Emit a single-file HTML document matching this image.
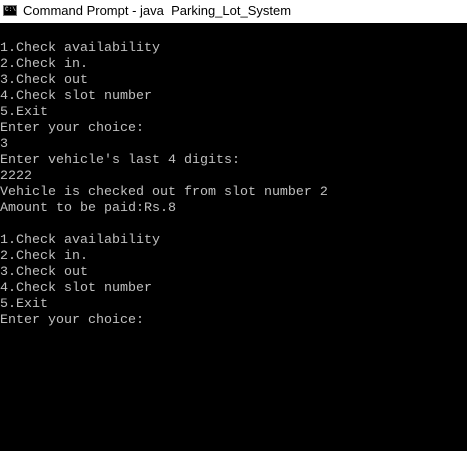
<!DOCTYPE html>
<html><head><style>
html,body{margin:0;padding:0;width:467px;height:451px;overflow:hidden;background:#000;}
.t{position:absolute;left:0;top:0;width:467px;height:23px;background:#fff;}
.t span{position:absolute;left:23px;top:3px;font:13px "Liberation Sans",sans-serif;color:#000;}
.ic{position:absolute;left:3px;top:5px;width:14px;height:11px;background:#000;border:1px solid #777;box-sizing:border-box;}
.ic i{position:absolute;left:1px;top:1px;font:bold 6px "Liberation Mono",monospace;color:#ccc;font-style:normal;line-height:6px;}
pre{position:absolute;left:0;top:41px;margin:0;font:13.33px/16px "Liberation Mono",monospace;color:#c0c0c0;}
</style></head><body>
<div class="t"><div class="ic"><i>C:\</i></div><span>Command Prompt - java&nbsp; Parking_Lot_System</span></div>
<pre>1.Check availability
2.Check in.
3.Check out
4.Check slot number
5.Exit
Enter your choice:
3
Enter vehicle's last 4 digits:
2222
Vehicle is checked out from slot number 2
Amount to be paid:Rs.8

1.Check availability
2.Check in.
3.Check out
4.Check slot number
5.Exit
Enter your choice:</pre>
</body></html>
